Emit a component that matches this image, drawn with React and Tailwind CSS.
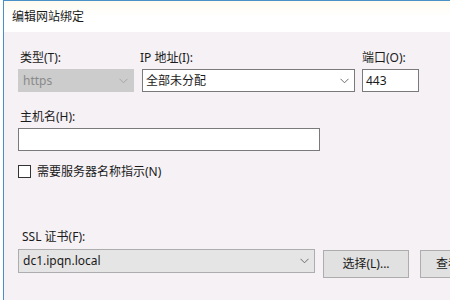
const font = { fontFamily: '"Noto Sans", "Noto Sans CJK SC", sans-serif' };

function Chevron({ color = '#6d6d6d' }) {
  return (
    <svg width="9" height="6" viewBox="0 0 9 6" className="shrink-0">
      <polyline points="0.5,0.8 4.5,4.8 8.5,0.8" fill="none" stroke={color} strokeWidth="1" />
    </svg>
  );
}

export default function App() {
  return (
    <div className="w-[450px] h-[300px] overflow-hidden flex bg-white text-[12px] text-[#1a1a1a]" style={font}>
      <div className="w-[3px] shrink-0 bg-white" />
      <div className="flex-1 flex flex-col border-l border-[#4a90c8] min-w-0">
        <div className="h-[32px] shrink-0 border-t border-[#4a90c8] bg-gradient-to-b from-[#fdfbf0] via-white to-white flex items-center pl-[8px]">
          <span className="leading-none">编辑网站绑定</span>
        </div>
        <div className="flex-1 bg-[#f5f1f5] pl-[14px] pt-[18px] flex flex-col overflow-hidden">
          <div className="flex gap-[8px]">
            <div className="w-[116px] flex flex-col shrink-0">
              <div className="h-[16px] leading-[16px] pl-[2px] mb-[3px]">类型(T):</div>
              <div className="h-[23px] bg-[#cccccc] border border-[#cccccc] flex items-center justify-between pl-[4px] pr-[5px] text-[#8a8a8a]">
                <span>https</span>
                <Chevron color="#a6a6a6" />
              </div>
            </div>
            <div className="w-[213px] flex flex-col shrink-0">
              <div className="h-[16px] leading-[16px] mb-[3px] -ml-[2px]">IP 地址(I):</div>
              <div className="h-[23px] bg-white border border-[#7a7a7a] flex items-center justify-between pl-[3px] pr-[5px]">
                <span>全部未分配</span>
                <Chevron />
              </div>
            </div>
            <div className="w-[57px] flex flex-col shrink-0 ml-[-1px]">
              <div className="h-[16px] leading-[16px] mb-[3px]">端口(O):</div>
              <div className="h-[23px] bg-white border border-[#7a7a7a] flex items-center pl-[3px]">443</div>
            </div>
          </div>

          <div className="h-[16px] leading-[16px] pl-[2px] mt-[17px] mb-[3px]">主机名(H):</div>
          <div className="w-[302px] h-[23px] bg-white border border-[#7a7a7a]" />

          <div className="flex items-center mt-[14px] h-[13px]">
            <div className="w-[13px] h-[13px] bg-white border border-[#333333]" />
            <span className="ml-[6px] leading-none">需要服务器名称指示(N)</span>
          </div>

          <div className="h-[16px] leading-[16px] pl-[4px] mt-[51px] mb-[4px]">SSL 证书(F):</div>
          <div className="flex gap-[8px] items-start">
            <div className="w-[297px] h-[24px] shrink-0 bg-[#e5e5e5] border border-[#adadad] flex items-center justify-between pl-[4px] pr-[5px]">
              <span>dc1.ipqn.local</span>
              <Chevron />
            </div>
            <div className="w-[86px] h-[28px] bg-[#e1e1e1] border border-[#adadad] flex items-center justify-center shrink-0 mt-[1px]">
              选择(L)...
            </div>
            <div className="w-[86px] h-[28px] bg-[#e1e1e1] border border-[#adadad] flex items-center pl-[15px] shrink-0 mt-[1px] ml-[3px]">
              查看...
            </div>
          </div>
        </div>
      </div>
    </div>
  );
}
